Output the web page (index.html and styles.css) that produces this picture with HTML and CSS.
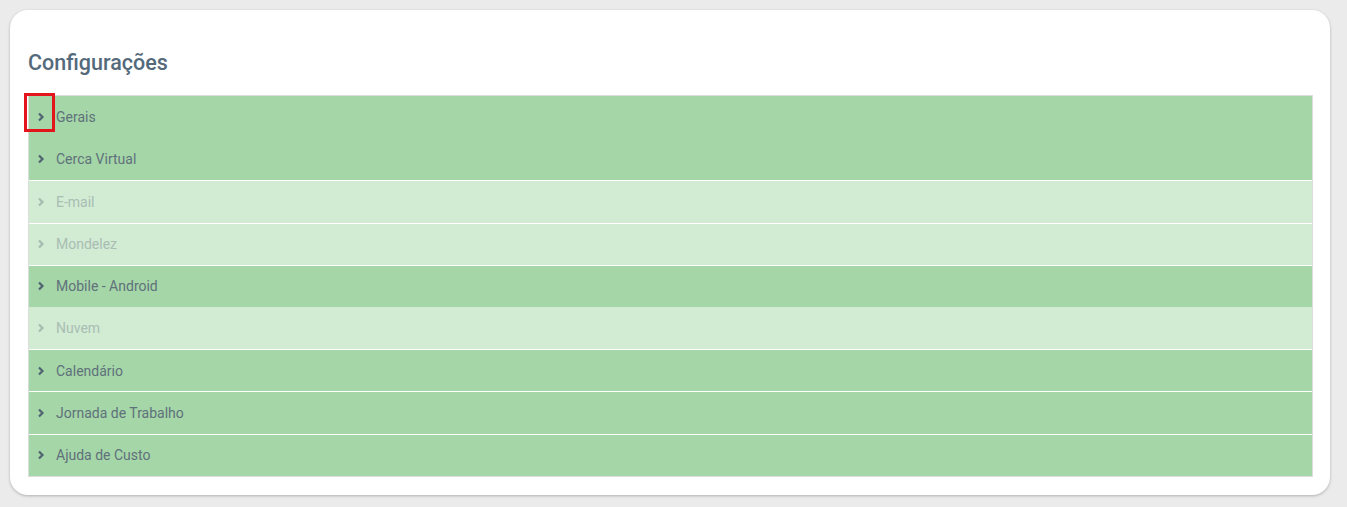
FILE: index.html
```html
<!DOCTYPE html>
<html lang="pt">
<head>
<meta charset="utf-8">
<title>Configurações</title>
<link rel="stylesheet" href="styles.css">
</head>
<body>
<div class="card">
  <h2 class="title">Configurações</h2>
  <div class="list">
    <div class="row">
      <svg class="chev" viewBox="0 0 8 10"><polyline points="2,1.5 5.5,5 2,8.5"/></svg>
      <span>Gerais</span>
      <div class="mark"></div>
    </div>
    <div class="row"><svg class="chev" viewBox="0 0 8 10"><polyline points="2,1.5 5.5,5 2,8.5"/></svg><span>Cerca Virtual</span></div>
    <div class="row disabled sep"><svg class="chev" viewBox="0 0 8 10"><polyline points="2,1.5 5.5,5 2,8.5"/></svg><span>E-mail</span></div>
    <div class="row disabled sep"><svg class="chev" viewBox="0 0 8 10"><polyline points="2,1.5 5.5,5 2,8.5"/></svg><span>Mondelez</span></div>
    <div class="row sep"><svg class="chev" viewBox="0 0 8 10"><polyline points="2,1.5 5.5,5 2,8.5"/></svg><span>Mobile - Android</span></div>
    <div class="row disabled"><svg class="chev" viewBox="0 0 8 10"><polyline points="2,1.5 5.5,5 2,8.5"/></svg><span>Nuvem</span></div>
    <div class="row sep"><svg class="chev" viewBox="0 0 8 10"><polyline points="2,1.5 5.5,5 2,8.5"/></svg><span>Calendário</span></div>
    <div class="row sep"><svg class="chev" viewBox="0 0 8 10"><polyline points="2,1.5 5.5,5 2,8.5"/></svg><span>Jornada de Trabalho</span></div>
    <div class="row sep"><svg class="chev" viewBox="0 0 8 10"><polyline points="2,1.5 5.5,5 2,8.5"/></svg><span>Ajuda de Custo</span></div>
  </div>
</div>
</body>
</html>
```
FILE: styles.css
```css
html, body {
  margin: 0;
  padding: 0;
  background: #ebebeb;
}
body {
  font-family: Roboto, "Noto Sans", sans-serif;
  padding: 10px 17px 0 10px;
  height: 507px;
  box-sizing: border-box;
}
.card {
  background: #fff;
  border-radius: 18px;
  box-shadow: 0 1px 3px rgba(0, 0, 0, 0.25);
  padding: 0 17px 18px 18px;
}
.title {
  margin: 0;
  padding: 41px 0 20px 0;
  font-size: 21.5px;
  line-height: 24px;
  font-weight: 500;
  color: #546a7b;
}
.list {
  border: 1px solid #dcdedc;
  background: #fff;
}
.row {
  position: relative;
  display: flex;
  align-items: center;
  height: 42.2px;
  box-sizing: border-box;
  background: #a5d6a7;
  color: #5f717b;
  font-size: 14px;
  padding-left: 8px;
}
.row.sep {
  border-top: 1px solid #fff;
}
.row.disabled {
  background: #d2ebd3;
  color: #a9bdb3;
}
.chev {
  width: 8px;
  height: 10px;
  margin-right: 11px;
  fill: none;
  stroke: #4f6370;
  stroke-width: 2.2;
}
.row.disabled .chev {
  stroke: #a5bbb0;
}
.mark {
  position: absolute;
  left: -5px;
  top: -3px;
  width: 31px;
  height: 39px;
  box-sizing: border-box;
  border: 3px solid #e3141b;
}
```
